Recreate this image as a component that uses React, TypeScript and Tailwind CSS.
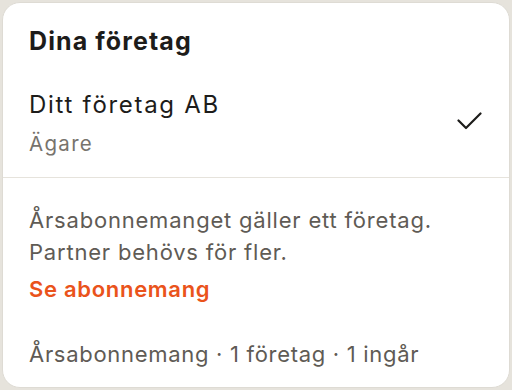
export default function App() {
  return (
    <div className="h-[390px] w-[512px] bg-[#e6e3dc] p-[2px] font-['Inter','Noto_Sans',sans-serif]">
      <div className="flex h-full flex-col overflow-hidden rounded-[18px] border border-[#dedbd4] bg-white">
        <div className="px-[26px] pt-[23px]">
          <h2 className="text-[25px] font-bold leading-[30px] tracking-[1.1px] text-[#1d1c1a]">Dina företag</h2>
        </div>
        <div className="flex items-center justify-between pl-[26px] pr-[27px] pt-[34px] pb-[19px]">
          <div>
            <div className="text-[24px] leading-[30px] tracking-[1.7px] text-[#1d1c1a]">Ditt företag AB</div>
            <div className="mt-[10px] text-[20.5px] leading-[28px] tracking-[1.3px] text-[#77736d]">Ägare</div>
          </div>
          <svg width="25" height="18" viewBox="0 0 25 18" fill="none" stroke="#1d1c1a" strokeWidth="2.2" strokeLinecap="round" strokeLinejoin="round" className="-mt-[6px]">
            <path d="M1.5 8.5l7.5 7.5L23.5 1.5" />
          </svg>
        </div>
        <div className="h-px bg-[#e6e3dc]" />
        <div className="px-[26px] pt-[26px]">
          <p className="text-[22px] leading-[32px] tracking-[0.8px] text-[#5f5b55]">
            Årsabonnemanget gäller ett företag.
            <br />
            Partner behövs för fler.
          </p>
          <button className="mt-[6px] text-[22px] font-semibold leading-[30px] tracking-[0.7px] text-[#ea531b]">Se abonnemang</button>
          <div className="mt-[35px] text-[22px] leading-[30px] tracking-[0.7px] text-[#5f5b55]">Årsabonnemang · 1 företag · 1 ingår</div>
        </div>
      </div>
    </div>
  );
}
